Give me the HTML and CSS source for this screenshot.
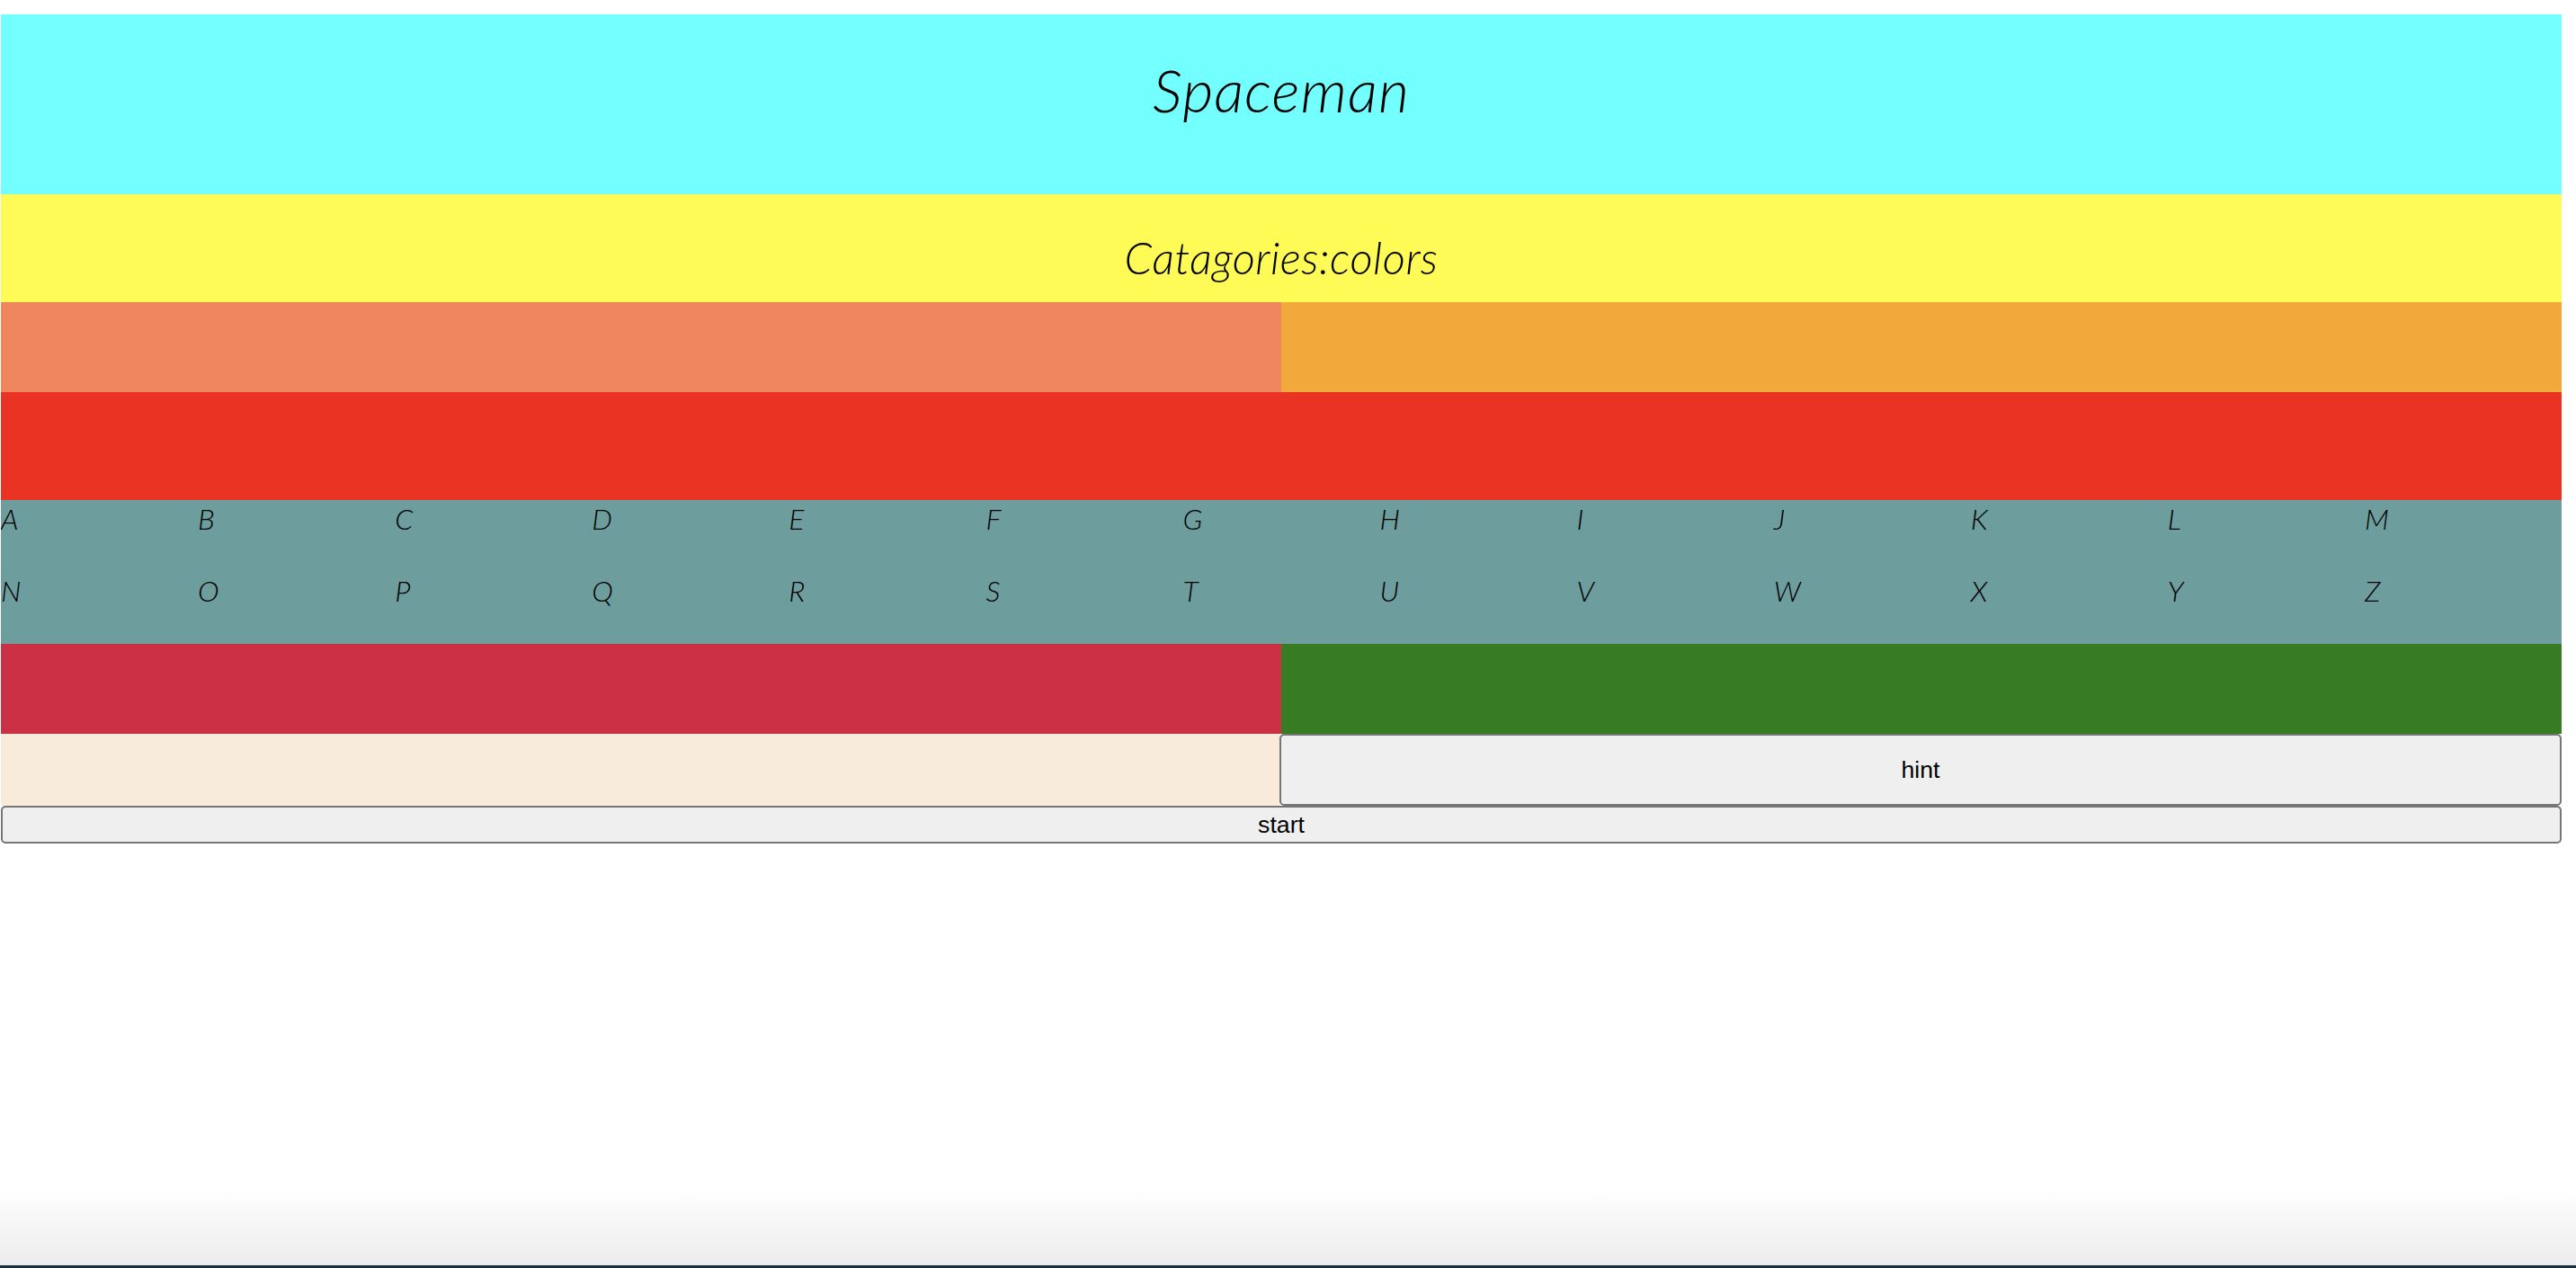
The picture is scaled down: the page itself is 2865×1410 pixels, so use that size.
FILE: index.html
```html
<!DOCTYPE html>
<html lang="en">
<head>
<meta charset="utf-8">
<title>Spaceman</title>
<link rel="stylesheet" href="styles.css">
</head>
<body>
  <div class="page">
    <header class="title-bar"><h1 class="title">Spaceman</h1></header>
    <div class="category-bar"><h2 class="category">Catagories:colors</h2></div>
    <div class="split-row">
      <div class="panel panel-coral"></div>
      <div class="panel panel-orange"></div>
    </div>
    <div class="word-bar"></div>
    <div class="letters">
      <div class="letter">A</div><div class="letter">B</div><div class="letter">C</div><div class="letter">D</div><div class="letter">E</div><div class="letter">F</div><div class="letter">G</div><div class="letter">H</div><div class="letter">I</div><div class="letter">J</div><div class="letter">K</div><div class="letter">L</div><div class="letter">M</div>
      <div class="letter">N</div><div class="letter">O</div><div class="letter">P</div><div class="letter">Q</div><div class="letter">R</div><div class="letter">S</div><div class="letter">T</div><div class="letter">U</div><div class="letter">V</div><div class="letter">W</div><div class="letter">X</div><div class="letter">Y</div><div class="letter">Z</div>
    </div>
    <div class="split-row">
      <div class="panel panel-crimson"></div>
      <div class="panel panel-green"></div>
    </div>
    <div class="hint-row">
      <div class="hint-text"></div>
      <button class="btn hint-btn">hint</button>
    </div>
    <button class="btn start-btn">start</button>
  </div>
</body>
</html>
```
FILE: styles.css
```css
html {
  height: 1410px;
  background: linear-gradient(to bottom, #ffffff 0, #ffffff 1322px, #f4f4f4 1370px, #ececec 1407px, #1b2f3a 1407px, #1b2f3a 1410px);
}
body {
  margin: 16px 16px 0 1px;
  font-family: "Lato", "Liberation Sans", sans-serif;
}
.page {
  display: flex;
  flex-direction: column;
}
.title-bar {
  height: 200px;
  box-sizing: border-box;
  padding-top: 44px;
  background: #74ffff;
  text-align: center;
}
.title {
  margin: 0;
  font-size: 66px;
  font-weight: 300;
  font-style: italic;
  letter-spacing: 1px;
  line-height: 1.2;
  color: #000;
}
.category-bar {
  height: 120px;
  box-sizing: border-box;
  padding-top: 41px;
  background: #fefb56;
  text-align: center;
}
.category {
  margin: 0;
  font-size: 49px;
  font-weight: 300;
  font-style: italic;
  letter-spacing: 0.5px;
  line-height: 1.2;
  color: #000;
}
.split-row {
  display: flex;
  height: 100px;
}
.panel {
  flex: 1 1 0;
}
.panel-coral { background: #ef865e; }
.panel-orange { background: #f3a83c; }
.panel-crimson { background: #cb3044; }
.panel-green { background: #377c22; }
.word-bar {
  height: 120px;
  background: #e93323;
}
.letters {
  display: grid;
  grid-template-columns: repeat(13, 1fr);
  grid-auto-rows: 80px;
  background: #6e9d9e;
}
.letter {
  padding-top: 2px;
  font-size: 32px;
  font-weight: 300;
  font-style: italic;
  line-height: 1.2;
  color: #000;
}
.hint-row {
  display: flex;
  height: 80px;
}
.hint-text {
  flex: 1 1 0;
  background: #f8ebdc;
}
.btn {
  margin: 0;
  font-family: "Liberation Sans", Arial, sans-serif;
  font-size: 26.67px;
  color: #000;
  background: #efefef;
  border: 2px solid #767676;
  border-radius: 5px;
  padding: 0;
}
.hint-btn {
  flex: 1 1 0;
  height: 80px;
}
.start-btn {
  width: 100%;
  height: 42px;
}
```
